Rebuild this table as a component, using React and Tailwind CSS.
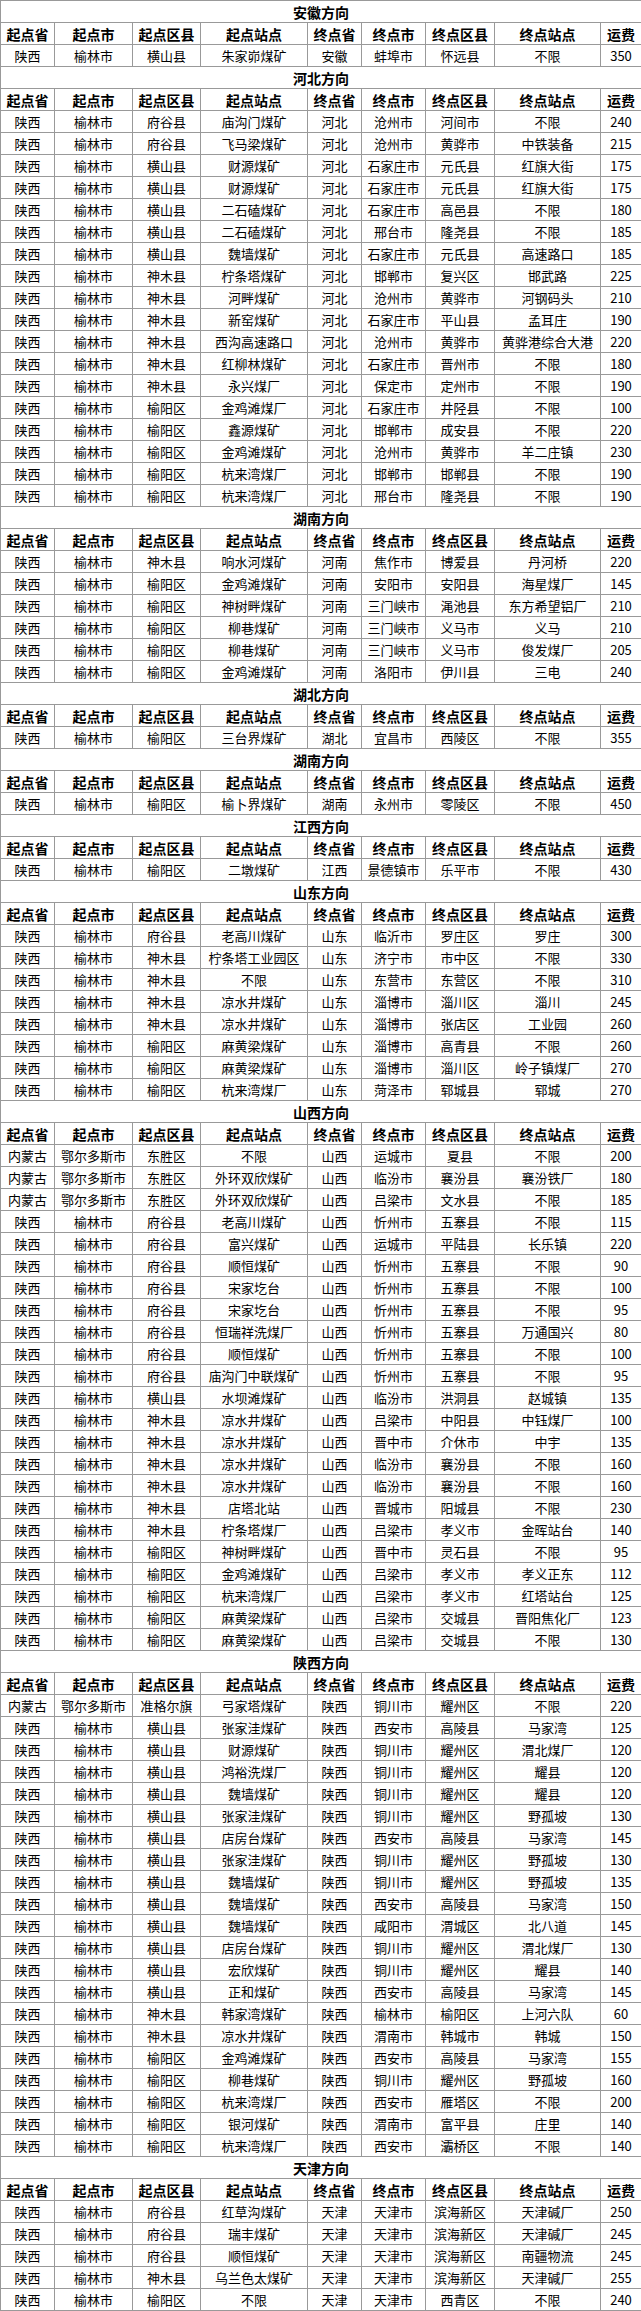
import React from 'react';

const headers = ['起点省', '起点市', '起点区县', '起点站点', '终点省', '终点市', '终点区县', '终点站点', '运费'];
const widths = [54, 78, 68, 107, 54, 64, 69, 106, 41];

// each row: space separated cells
const sections = [
    {
        title: '安徽方向',
        rows: ['陕西 榆林市 横山县 朱家峁煤矿 安徽 蚌埠市 怀远县 不限 350'],
    },
    {
        title: '河北方向',
        rows: [
            '陕西 榆林市 府谷县 庙沟门煤矿 河北 沧州市 河间市 不限 240',
            '陕西 榆林市 府谷县 飞马梁煤矿 河北 沧州市 黄骅市 中铁装备 215',
            '陕西 榆林市 横山县 财源煤矿 河北 石家庄市 元氏县 红旗大街 175',
            '陕西 榆林市 横山县 财源煤矿 河北 石家庄市 元氏县 红旗大街 175',
            '陕西 榆林市 横山县 二石磕煤矿 河北 石家庄市 高邑县 不限 180',
            '陕西 榆林市 横山县 二石磕煤矿 河北 邢台市 隆尧县 不限 185',
            '陕西 榆林市 横山县 魏墙煤矿 河北 石家庄市 元氏县 高速路口 185',
            '陕西 榆林市 神木县 柠条塔煤矿 河北 邯郸市 复兴区 邯武路 225',
            '陕西 榆林市 神木县 河畔煤矿 河北 沧州市 黄骅市 河钢码头 210',
            '陕西 榆林市 神木县 新窑煤矿 河北 石家庄市 平山县 孟耳庄 190',
            '陕西 榆林市 神木县 西沟高速路口 河北 沧州市 黄骅市 黄骅港综合大港 220',
            '陕西 榆林市 神木县 红柳林煤矿 河北 石家庄市 晋州市 不限 180',
            '陕西 榆林市 神木县 永兴煤厂 河北 保定市 定州市 不限 190',
            '陕西 榆林市 榆阳区 金鸡滩煤厂 河北 石家庄市 井陉县 不限 100',
            '陕西 榆林市 榆阳区 鑫源煤矿 河北 邯郸市 成安县 不限 220',
            '陕西 榆林市 榆阳区 金鸡滩煤矿 河北 沧州市 黄骅市 羊二庄镇 230',
            '陕西 榆林市 榆阳区 杭来湾煤厂 河北 邯郸市 邯郸县 不限 190',
            '陕西 榆林市 榆阳区 杭来湾煤厂 河北 邢台市 隆尧县 不限 190',
        ],
    },
    {
        title: '湖南方向',
        rows: [
            '陕西 榆林市 神木县 响水河煤矿 河南 焦作市 博爱县 丹河桥 220',
            '陕西 榆林市 榆阳区 金鸡滩煤矿 河南 安阳市 安阳县 海星煤厂 145',
            '陕西 榆林市 榆阳区 神树畔煤矿 河南 三门峡市 渑池县 东方希望铝厂 210',
            '陕西 榆林市 榆阳区 柳巷煤矿 河南 三门峡市 义马市 义马 210',
            '陕西 榆林市 榆阳区 柳巷煤矿 河南 三门峡市 义马市 俊发煤厂 205',
            '陕西 榆林市 榆阳区 金鸡滩煤矿 河南 洛阳市 伊川县 三电 240',
        ],
    },
    {
        title: '湖北方向',
        rows: ['陕西 榆林市 榆阳区 三台界煤矿 湖北 宜昌市 西陵区 不限 355'],
    },
    {
        title: '湖南方向',
        rows: ['陕西 榆林市 榆阳区 榆卜界煤矿 湖南 永州市 零陵区 不限 450'],
    },
    {
        title: '江西方向',
        rows: ['陕西 榆林市 榆阳区 二墩煤矿 江西 景德镇市 乐平市 不限 430'],
    },
    {
        title: '山东方向',
        rows: [
            '陕西 榆林市 府谷县 老高川煤矿 山东 临沂市 罗庄区 罗庄 300',
            '陕西 榆林市 神木县 柠条塔工业园区 山东 济宁市 市中区 不限 330',
            '陕西 榆林市 神木县 不限 山东 东营市 东营区 不限 310',
            '陕西 榆林市 神木县 凉水井煤矿 山东 淄博市 淄川区 淄川 245',
            '陕西 榆林市 神木县 凉水井煤矿 山东 淄博市 张店区 工业园 260',
            '陕西 榆林市 榆阳区 麻黄梁煤矿 山东 淄博市 高青县 不限 260',
            '陕西 榆林市 榆阳区 麻黄梁煤矿 山东 淄博市 淄川区 岭子镇煤厂 270',
            '陕西 榆林市 榆阳区 杭来湾煤厂 山东 菏泽市 郓城县 郓城 270',
        ],
    },
    {
        title: '山西方向',
        rows: [
            '内蒙古 鄂尔多斯市 东胜区 不限 山西 运城市 夏县 不限 200',
            '内蒙古 鄂尔多斯市 东胜区 外环双欣煤矿 山西 临汾市 襄汾县 襄汾铁厂 180',
            '内蒙古 鄂尔多斯市 东胜区 外环双欣煤矿 山西 吕梁市 文水县 不限 185',
            '陕西 榆林市 府谷县 老高川煤矿 山西 忻州市 五寨县 不限 115',
            '陕西 榆林市 府谷县 富兴煤矿 山西 运城市 平陆县 长乐镇 220',
            '陕西 榆林市 府谷县 顺恒煤矿 山西 忻州市 五寨县 不限 90',
            '陕西 榆林市 府谷县 宋家圪台 山西 忻州市 五寨县 不限 100',
            '陕西 榆林市 府谷县 宋家圪台 山西 忻州市 五寨县 不限 95',
            '陕西 榆林市 府谷县 恒瑞祥洗煤厂 山西 忻州市 五寨县 万通国兴 80',
            '陕西 榆林市 府谷县 顺恒煤矿 山西 忻州市 五寨县 不限 100',
            '陕西 榆林市 府谷县 庙沟门中联煤矿 山西 忻州市 五寨县 不限 95',
            '陕西 榆林市 横山县 水坝滩煤矿 山西 临汾市 洪洞县 赵城镇 135',
            '陕西 榆林市 神木县 凉水井煤矿 山西 吕梁市 中阳县 中钰煤厂 100',
            '陕西 榆林市 神木县 凉水井煤矿 山西 晋中市 介休市 中宇 135',
            '陕西 榆林市 神木县 凉水井煤矿 山西 临汾市 襄汾县 不限 160',
            '陕西 榆林市 神木县 凉水井煤矿 山西 临汾市 襄汾县 不限 160',
            '陕西 榆林市 神木县 店塔北站 山西 晋城市 阳城县 不限 230',
            '陕西 榆林市 神木县 柠条塔煤厂 山西 吕梁市 孝义市 金晖站台 140',
            '陕西 榆林市 榆阳区 神树畔煤矿 山西 晋中市 灵石县 不限 95',
            '陕西 榆林市 榆阳区 金鸡滩煤矿 山西 吕梁市 孝义市 孝义正东 112',
            '陕西 榆林市 榆阳区 杭来湾煤厂 山西 吕梁市 孝义市 红塔站台 125',
            '陕西 榆林市 榆阳区 麻黄梁煤矿 山西 吕梁市 交城县 晋阳焦化厂 123',
            '陕西 榆林市 榆阳区 麻黄梁煤矿 山西 吕梁市 交城县 不限 130',
        ],
    },
    {
        title: '陕西方向',
        rows: [
            '内蒙古 鄂尔多斯市 准格尔旗 弓家塔煤矿 陕西 铜川市 耀州区 不限 220',
            '陕西 榆林市 横山县 张家洼煤矿 陕西 西安市 高陵县 马家湾 125',
            '陕西 榆林市 横山县 财源煤矿 陕西 铜川市 耀州区 渭北煤厂 120',
            '陕西 榆林市 横山县 鸿裕洗煤厂 陕西 铜川市 耀州区 耀县 120',
            '陕西 榆林市 横山县 魏墙煤矿 陕西 铜川市 耀州区 耀县 120',
            '陕西 榆林市 横山县 张家洼煤矿 陕西 铜川市 耀州区 野孤坡 130',
            '陕西 榆林市 横山县 店房台煤矿 陕西 西安市 高陵县 马家湾 145',
            '陕西 榆林市 横山县 张家洼煤矿 陕西 铜川市 耀州区 野孤坡 130',
            '陕西 榆林市 横山县 魏墙煤矿 陕西 铜川市 耀州区 野孤坡 135',
            '陕西 榆林市 横山县 魏墙煤矿 陕西 西安市 高陵县 马家湾 150',
            '陕西 榆林市 横山县 魏墙煤矿 陕西 咸阳市 渭城区 北八道 145',
            '陕西 榆林市 横山县 店房台煤矿 陕西 铜川市 耀州区 渭北煤厂 130',
            '陕西 榆林市 横山县 宏欣煤矿 陕西 铜川市 耀州区 耀县 140',
            '陕西 榆林市 横山县 正和煤矿 陕西 西安市 高陵县 马家湾 145',
            '陕西 榆林市 神木县 韩家湾煤矿 陕西 榆林市 榆阳区 上河六队 60',
            '陕西 榆林市 神木县 凉水井煤矿 陕西 渭南市 韩城市 韩城 150',
            '陕西 榆林市 榆阳区 金鸡滩煤矿 陕西 西安市 高陵县 马家湾 155',
            '陕西 榆林市 榆阳区 柳巷煤矿 陕西 铜川市 耀州区 野孤坡 160',
            '陕西 榆林市 榆阳区 杭来湾煤厂 陕西 西安市 雁塔区 不限 200',
            '陕西 榆林市 榆阳区 银河煤矿 陕西 渭南市 富平县 庄里 140',
            '陕西 榆林市 榆阳区 杭来湾煤厂 陕西 西安市 灞桥区 不限 140',
        ],
    },
    {
        title: '天津方向',
        rows: [
            '陕西 榆林市 府谷县 红草沟煤矿 天津 天津市 滨海新区 天津碱厂 250',
            '陕西 榆林市 府谷县 瑞丰煤矿 天津 天津市 滨海新区 天津碱厂 245',
            '陕西 榆林市 府谷县 顺恒煤矿 天津 天津市 滨海新区 南疆物流 245',
            '陕西 榆林市 神木县 乌兰色太煤矿 天津 天津市 滨海新区 天津碱厂 255',
            '陕西 榆林市 榆阳区 不限 天津 天津市 西青区 不限 240',
        ],
    },
];

export default function App() {
    return (
        <div className="w-[641px] bg-white text-black" style={{ fontFamily: '"Noto Sans CJK SC", "Noto Sans", sans-serif' }}>
            <table className="w-full table-fixed border-collapse">
                <colgroup>
                    {widths.map((w, i) => (
                        <col key={i} style={{ width: w }} />
                    ))}
                </colgroup>
                <tbody>
                    {sections.map((s, si) => (
                        <React.Fragment key={si}>
                            <tr className="h-[22px]">
                                <td colSpan={9} className="border border-[#999] p-0 text-center text-[14px] font-bold leading-[20px]">
                                    {s.title}
                                </td>
                            </tr>
                            <tr className="h-[22px]">
                                {headers.map((h) => (
                                    <td key={h} className="border border-[#999] p-0 text-center text-[14px] font-bold leading-[20px] whitespace-nowrap">
                                        {h}
                                    </td>
                                ))}
                            </tr>
                            {s.rows.map((r, ri) => (
                                <tr key={ri} className="h-[22px]">
                                    {r.split(' ').map((c, ci) => (
                                        <td key={ci} className="border border-[#999] p-0 text-center text-[13px] leading-[20px] whitespace-nowrap">
                                            {c}
                                        </td>
                                    ))}
                                </tr>
                            ))}
                        </React.Fragment>
                    ))}
                </tbody>
            </table>
        </div>
    );
}
